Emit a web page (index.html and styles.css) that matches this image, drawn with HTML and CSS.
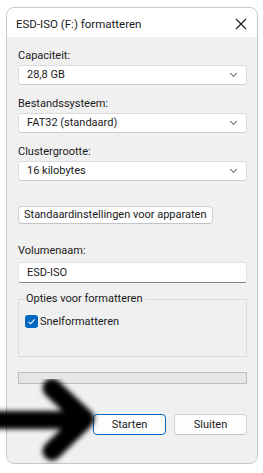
FILE: index.html
```html
<!DOCTYPE html>
<html lang="nl">
<head>
    <meta charset="UTF-8">
    <meta name="viewport" content="width=device-width, initial-scale=1.0">
    <title>ESD-ISO (F:) formatteren</title>
    <link rel="stylesheet" href="styles.css">
</head>
<body>
<div class="window">
    <!-- Title bar -->
    <div class="titlebar">
        <span class="title">ESD-ISO (F:) formatteren</span>
        <svg class="close" width="12" height="12" viewBox="0 0 12 12">
            <path d="M1 1 L11 11 M11 1 L1 11" stroke="#1a1a1a" stroke-width="1.1" fill="none"/>
        </svg>
    </div>

    <div class="content">
        <div class="field">
            <label class="field-label">Capaciteit:</label>
            <div class="combo">28,8 GB<span class="chevron"></span></div>
        </div>

        <div class="field">
            <label class="field-label">Bestandssysteem:</label>
            <div class="combo">FAT32 (standaard)<span class="chevron"></span></div>
        </div>

        <div class="field">
            <label class="field-label">Clustergrootte:</label>
            <div class="combo">16 kilobytes<span class="chevron"></span></div>
        </div>

        <button class="btn btn-defaults" type="button">Standaardinstellingen voor apparaten</button>

        <div class="field field-name">
            <label class="field-label">Volumenaam:</label>
            <div class="textbox">ESD-ISO</div>
        </div>

        <!-- Options group -->
        <fieldset class="group">
            <legend>Opties voor formatteren</legend>
            <div class="check-row">
                <span class="checkbox">
                    <svg width="9" height="9" viewBox="0 0 9 9">
                        <path d="M1.5 4.8 L3.6 6.8 L7.6 2.4" stroke="#fff" stroke-width="1.1" fill="none"/>
                    </svg>
                </span>
                <span>Snelformatteren</span>
            </div>
        </fieldset>

        <div class="progress"></div>

        <div class="actions">
            <button class="btn btn-primary" type="button">Starten</button>
            <button class="btn" type="button">Sluiten</button>
        </div>
    </div>
</div>

<!-- hand drawn arrow over the dialog -->
<svg class="arrow" width="100" height="90" viewBox="0 0 100 90">
    <defs>
        <filter id="blur" x="-20%" y="-20%" width="140%" height="140%">
            <feGaussianBlur stdDeviation="2.6"/>
        </filter>
    </defs>
    <g filter="url(#blur)" stroke="#000" stroke-linecap="round" fill="none">
        <path d="M-5 41 L80 41" stroke-width="18"/>
        <path d="M52 9 L85 40 L52 72" stroke-width="19" stroke-linejoin="round"/>
    </g>
</svg>
</body>
</html>
```

FILE: styles.css
```css
body {
    margin: 0;
    padding: 7px 5px 0 6px;
    background-color: #ffffff;
    font-family: Roboto, "Noto Sans", sans-serif;
    font-size: 11px;
    color: #1a1a1a;
}

.window {
    width: 250px;
    height: 455px;
    border: 1px solid #c9c9c9;
    border-radius: 8px;
    overflow: hidden;
    background-color: #f0f0f0;
}

.titlebar {
    height: 29px;
    background-color: #ffffff;
    display: flex;
    align-items: center;
    justify-content: space-between;
    padding: 2px 9px 0 9px;
    box-sizing: border-box;
}

.title {
    font-size: 11.5px;
    color: #1a1a1a;
}

.close {
    margin-right: 1px;
}

.content {
    padding: 11px 10px 0 11px;
}

.field {
    margin-bottom: 11px;
}

.field-label {
    display: block;
    line-height: 16px;
    margin-bottom: 1px;
}

.combo {
    height: 18px;
    line-height: 18px;
    background-color: #ffffff;
    border: 1px solid #dcdcdc;
    border-bottom-color: #cfcfcf;
    border-radius: 3px;
    padding: 0 8px;
    position: relative;
}

.chevron {
    position: absolute;
    right: 10px;
    top: 5px;
    width: 4px;
    height: 4px;
    border-right: 1px solid #6b6b6b;
    border-bottom: 1px solid #6b6b6b;
    transform: rotate(45deg);
}

.btn {
    font-family: inherit;
    font-size: 11px;
    color: #1a1a1a;
    background-color: #fdfdfd;
    border: 1px solid #d3d3d3;
    border-bottom-color: #c4c4c4;
    border-radius: 4px;
    height: 20px;
    padding: 0 5px;
    line-height: 16px;
}

.btn-defaults {
    margin-top: 14px;
    height: 18px;
}

.field-name {
    margin-top: 19px;
    margin-bottom: 9px;
}

.field-name .field-label {
    margin-bottom: 3px;
}

.textbox {
    height: 19px;
    line-height: 19px;
    background-color: #ffffff;
    border: 1px solid #e3e3e3;
    border-bottom: 1px solid #868686;
    border-radius: 3px;
    padding: 0 8px;
}

.group {
    margin: 0;
    padding: 1px 6px 0 6px;
    height: 62px;
    border: 1px solid #dcdcdc;
    border-radius: 0;
}

.group legend {
    padding: 0 2px;
    margin-left: -1px;
    line-height: 14px;
}

.check-row {
    display: flex;
    align-items: center;
    gap: 2px;
    margin-top: 8px;
}

.checkbox {
    width: 13px;
    height: 13px;
    border-radius: 3px;
    background-color: #0067c0;
    display: flex;
    align-items: center;
    justify-content: center;
}

.progress {
    margin-top: 15px;
    height: 10px;
    background-color: #e6e6e6;
    border: 1px solid #bcbcbc;
}

.actions {
    display: flex;
    justify-content: flex-end;
    gap: 8px;
    margin-top: 30px;
}

.actions .btn {
    width: 73px;
    height: 21px;
}

.btn-primary {
    border-color: #0067c0;
}

.arrow {
    position: absolute;
    left: 0;
    top: 379px;
}
```
